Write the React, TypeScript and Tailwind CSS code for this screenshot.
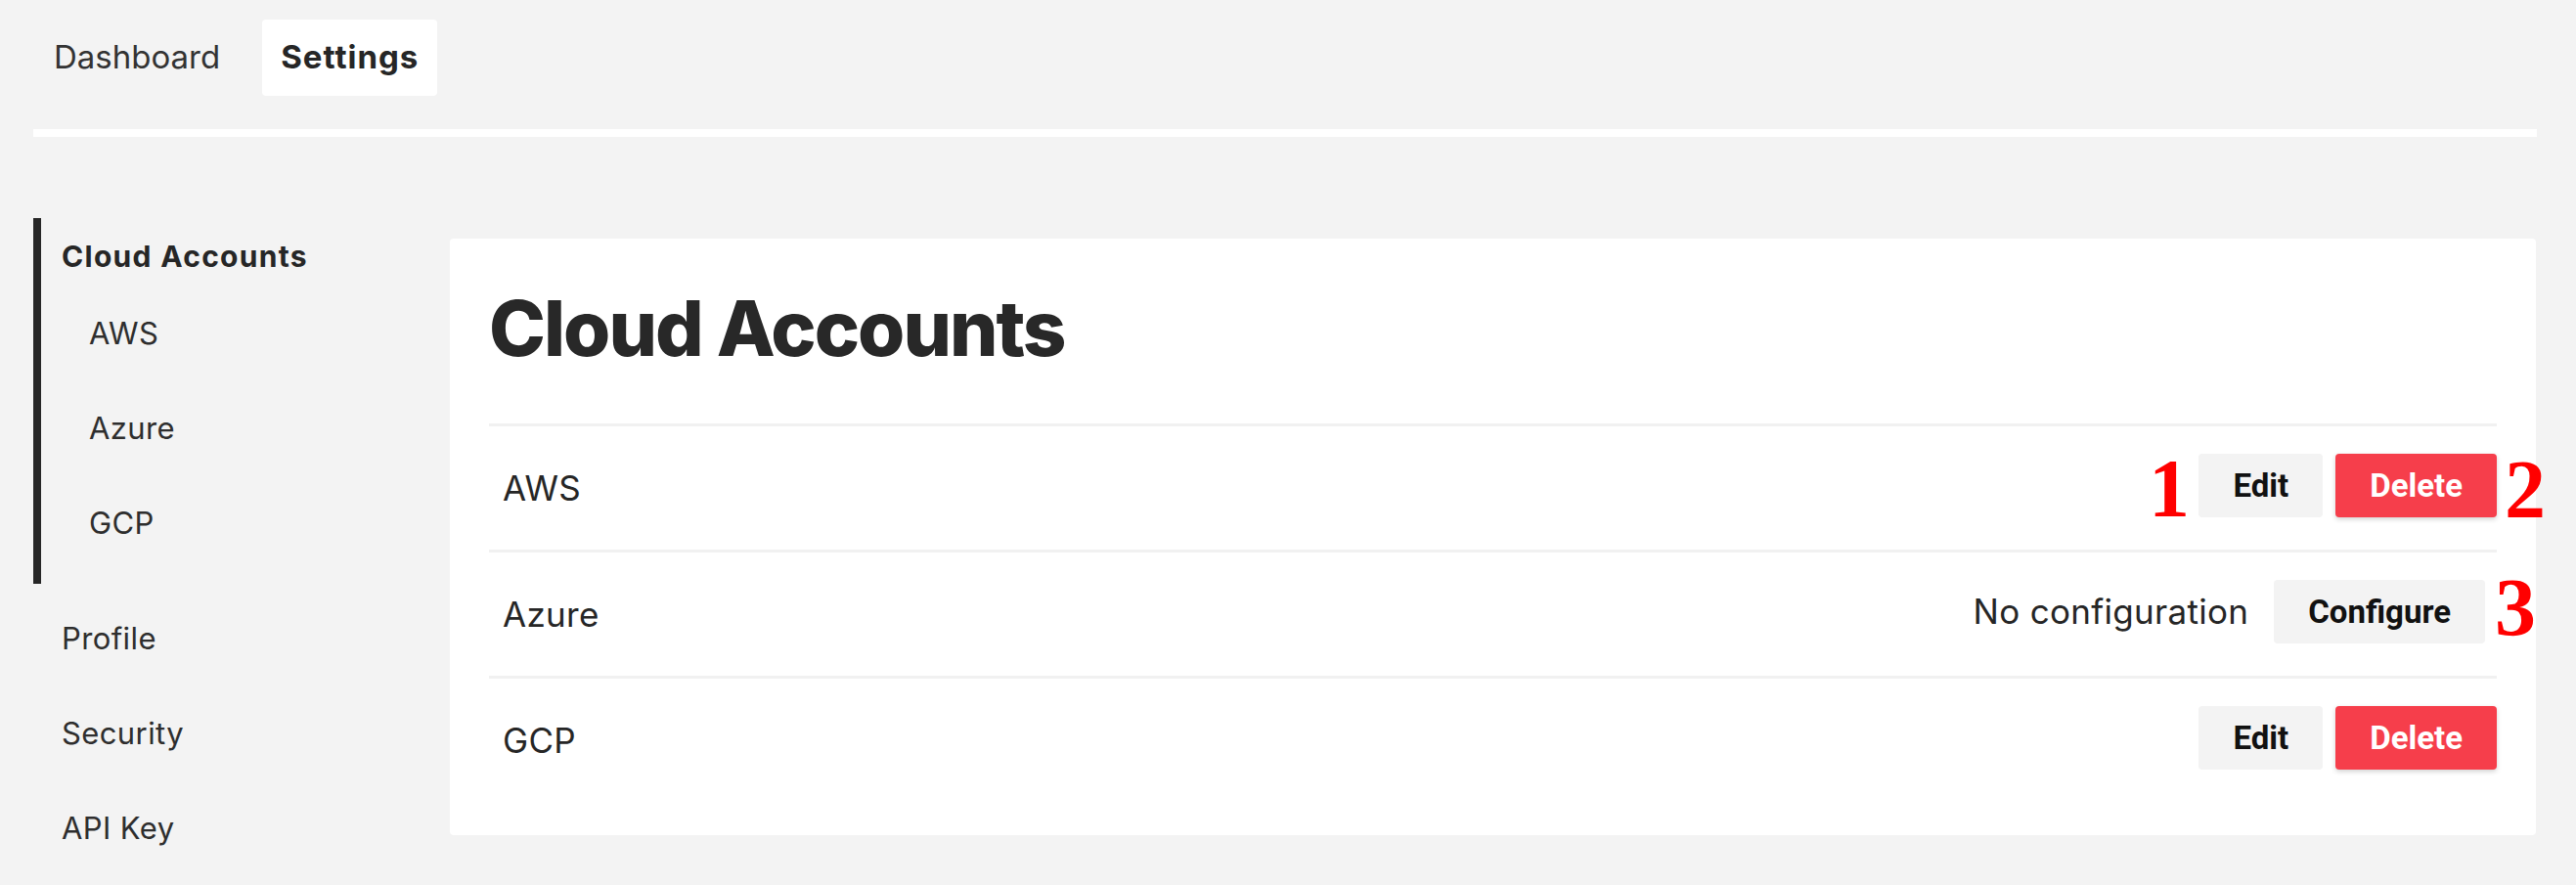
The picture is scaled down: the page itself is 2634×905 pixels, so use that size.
import React from "react";

const inter = { fontFamily: "Inter, 'Noto Sans', sans-serif" };

function SideItem({ label }: { label: string }) {
  return (
    <div className="h-[97px] flex items-center pl-[29px] text-[31px] tracking-[0.4px] text-[#2e2e2e]">
      {label}
    </div>
  );
}

function Btn({ children, variant = "gray", className = "" }: { children: React.ReactNode; variant?: "gray" | "red"; className?: string }) {
  const base =
    "h-[65px] px-[35px] flex items-center justify-center rounded-[4px] text-[33px] font-bold leading-none ";
  const v =
    variant === "red"
      ? "bg-[#f63e4b] text-white shadow-[0_2px_5px_rgba(0,0,0,0.18)]"
      : "bg-[#f3f3f3] text-[#111111]";
  return (
    <button className={base + v + " " + className} style={{ fontFamily: "Roboto, 'Liberation Sans', sans-serif" }}>
      {children}
    </button>
  );
}

function Row({ name, configured }: { name: string; configured: boolean }) {
  return (
    <div className="flex items-center justify-between border-t-[3px] border-[#f1f1f1] pl-[14px] h-[129px]">
      <span className="text-[35px] tracking-[0.3px] text-[#262626]">{name}</span>
      {configured ? (
        <div className="flex items-center gap-[13px] pb-[5px]">
          <Btn>Edit</Btn>
          <Btn variant="red">Delete</Btn>
        </div>
      ) : (
        <div className="flex items-center gap-[26px] pb-[5px]">
          <span className="text-[35px] tracking-[0.3px] text-[#262626]">No configuration</span>
          <Btn className="mr-[12px]">Configure</Btn>
        </div>
      )}
    </div>
  );
}

export default function App() {
  return (
    <div className="relative min-h-screen w-full bg-[#f3f3f3] overflow-hidden" style={inter}>
      <nav className="flex gap-[24px] pt-[20px] pl-[36px]">
        <div className="h-[78px] px-[19px] flex items-center text-[33px] text-[#333333]">Dashboard</div>
        <div className="h-[78px] px-[19px] flex items-center text-[33px] font-bold tracking-[1px] text-[#262626] bg-white rounded-[4px]">
          Settings
        </div>
      </nav>
      <div className="mt-[34px] ml-[34px] mr-[40px] h-[8px] bg-white" />

      <div className="flex items-start pl-[34px] pr-[41px] pt-[83px]">
        <aside className="w-[426px] shrink-0">
          <div className="border-l-[8px] border-[#262626] pb-[13px]">
            <div className="pt-[9px] h-[70px] flex items-center pl-[21px] text-[30px] font-bold tracking-[1.3px] text-[#262626]">
              Cloud Accounts
            </div>
            <div className="h-[97px] flex items-center pl-[49px] text-[31px] tracking-[0.4px] text-[#2e2e2e]">AWS</div>
            <div className="h-[97px] flex items-center pl-[49px] text-[31px] tracking-[0.4px] text-[#2e2e2e]">Azure</div>
            <div className="h-[97px] flex items-center pl-[49px] text-[31px] tracking-[0.4px] text-[#2e2e2e]">GCP</div>
          </div>
          <div className="mt-[8px]">
            <SideItem label="Profile" />
            <SideItem label="Security" />
            <SideItem label="API Key" />
          </div>
        </aside>

        <main className="mt-[21px] flex-1 bg-white rounded-[4px] px-[40px] pt-[53px] pb-[34px]">
          <h1
            className="h-[78px] text-[78px] leading-none font-extrabold text-[#282828] tracking-[-2px] mb-[58px]"
            style={{ fontFamily: "Inter, 'Noto Sans', sans-serif" }}
          >
            Cloud Accounts
          </h1>
          <Row name="AWS" configured />
          <Row name="Azure" configured={false} />
          <Row name="GCP" configured />
        </main>
      </div>

      <span
        className="absolute left-[2197px] top-[458px] text-[84px] leading-none font-bold text-[#ff0000]"
        style={{ fontFamily: "'Liberation Serif', serif" }}
      >
        1
      </span>
      <span
        className="absolute left-[2561px] top-[459px] text-[84px] leading-none font-bold text-[#ff0000]"
        style={{ fontFamily: "'Liberation Serif', serif" }}
      >
        2
      </span>
      <span
        className="absolute left-[2551px] top-[580px] text-[84px] leading-none font-bold text-[#ff0000]"
        style={{ fontFamily: "'Liberation Serif', serif" }}
      >
        3
      </span>
    </div>
  );
}
